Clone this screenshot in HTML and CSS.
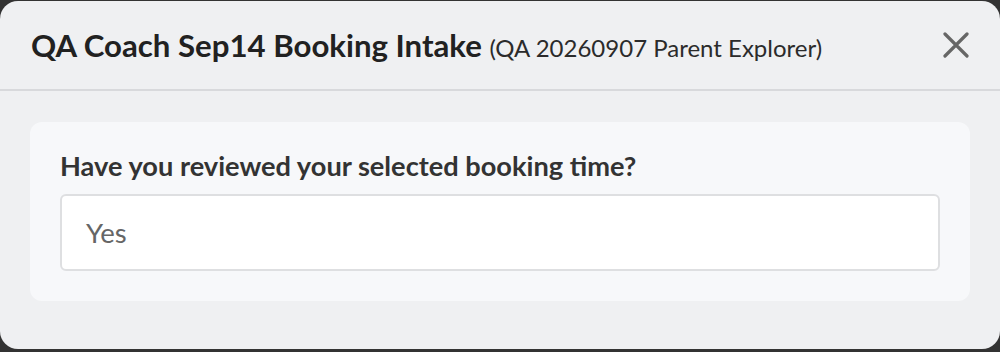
FILE: index.html
```html
<!DOCTYPE html>
<html lang="en">
<head>
    <meta charset="UTF-8">
    <meta name="viewport" content="width=device-width, initial-scale=1.0">
    <title>QA Coach Sep14 Booking Intake</title>
    <link rel="stylesheet" href="styles.css">
</head>
<body>
    <div class="modal">
        <header class="modal-header">
            <h1 class="modal-title">QA Coach Sep14 Booking Intake <span class="modal-subtitle">(QA 20260907 Parent Explorer)</span></h1>
            <button class="close-btn" aria-label="Close">
                <svg width="26" height="26" viewBox="0 0 26 26">
                    <path d="M2 2 L24 24 M24 2 L2 24" stroke="#666" stroke-width="3.2" stroke-linecap="round" fill="none"/>
                </svg>
            </button>
        </header>

        <div class="modal-body">
            <div class="question-card">
                <label class="question-label">Have you reviewed your selected booking time?</label>
                <div class="answer-box">Yes</div>
            </div>
        </div>
    </div>
</body>
</html>
```

FILE: styles.css
```css
html, body {
    margin: 0;
    padding: 0;
}

body {
    background-color: #333333;
    font-family: 'Lato', 'Liberation Sans', sans-serif;
    height: 352px;
    padding-top: 1px;
    box-sizing: border-box;
}

.modal {
    background-color: #eff0f2;
    border-radius: 18px;
    height: 348px;
    overflow: hidden;
}

.modal-header {
    display: flex;
    align-items: center;
    justify-content: space-between;
    height: 88px;
    padding: 0 31px 0 31px;
    border-bottom: 2px solid #d8d9dc;
}

.modal-title {
    margin: 0;
    font-size: 31.2px;
    font-weight: 700;
    color: #212121;
}

.modal-subtitle {
    font-size: 24px;
    font-weight: 400;
    color: #2b2b2b;
}

.close-btn {
    background: none;
    border: none;
    padding: 0;
    display: flex;
    cursor: pointer;
}

.modal-body {
    padding: 31px 30px 0 30px;
}

.question-card {
    background-color: #f7f8fa;
    border-radius: 12px;
    padding: 27px 30px 30px 30px;
}

.question-label {
    display: block;
    font-size: 27.2px;
    font-weight: 700;
    color: #333333;
    margin-bottom: 12px;
}

.answer-box {
    background-color: #ffffff;
    border: 2px solid #dedfe1;
    border-radius: 6px;
    height: 73px;
    padding: 0 24px;
    display: flex;
    align-items: center;
    font-size: 27.5px;
    color: #666666;
}
```
